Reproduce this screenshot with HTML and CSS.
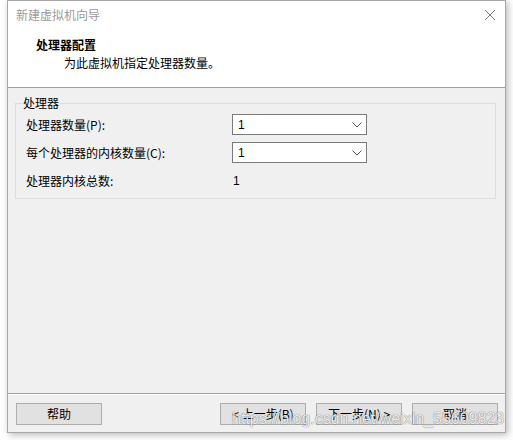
FILE: index.html
```html
<!DOCTYPE html>
<html lang="zh-CN">
<head>
<meta charset="utf-8">
<title>新建虚拟机向导</title>
<link rel="stylesheet" href="styles.css">
</head>
<body>
<div class="window">
  <div class="header">
    <div class="titlebar">
      <span class="title">新建虚拟机向导</span>
      <svg class="close" width="12" height="12" viewBox="0 0 12 12"><path d="M1 1 L11 11 M11 1 L1 11" stroke="#7a7a7a" stroke-width="1" fill="none"/></svg>
    </div>
    <div class="heading">处理器配置</div>
    <div class="subheading">为此虚拟机指定处理器数量。</div>
  </div>
  <div class="content">
    <fieldset class="group">
      <legend class="legend">处理器</legend>
      <div class="grid">
        <div class="label">处理器数量(P):</div>
        <div class="select"><span>1</span><svg width="10" height="6" viewBox="0 0 10 6"><path d="M0.5 0.5 L5 5 L9.5 0.5" stroke="#555" stroke-width="1" fill="none"/></svg></div>
        <div class="label">每个处理器的内核数量(C):</div>
        <div class="select"><span>1</span><svg width="10" height="6" viewBox="0 0 10 6"><path d="M0.5 0.5 L5 5 L9.5 0.5" stroke="#555" stroke-width="1" fill="none"/></svg></div>
        <div class="label">处理器内核总数:</div>
        <div class="value">1</div>
      </div>
    </fieldset>
  </div>
  <div class="footer">
    <button class="btn">帮助</button>
    <div class="spacer"></div>
    <button class="btn">&lt; 上一步(B)</button>
    <button class="btn">下一步(N) &gt;</button>
    <button class="btn">取消</button>
    <div class="watermark">https://blog.csdn.net/weixin_55609823</div>
  </div>
</div>
</body>
</html>
```
FILE: styles.css
```css
html, body {
  margin: 0;
  padding: 0;
  background: #ffffff;
}
body {
  width: 513px;
  height: 440px;
  overflow: hidden;
  font-family: "Noto Sans CJK SC", "Liberation Sans", sans-serif;
  font-size: 12px;
  color: #000;
}
.window {
  margin-left: 7px;
  width: 499px;
  height: 433px;
  box-sizing: border-box;
  border: 1px solid #a8a8a8;
  background: #f0f0f0;
  display: flex;
  flex-direction: column;
  box-shadow: 2px 2px 7px rgba(0, 0, 0, 0.28);
}
.header {
  height: 86px;
  background: #ffffff;
  border-bottom: 1px solid #a0a0a0;
  flex: none;
}
.titlebar {
  height: 28px;
  display: flex;
  align-items: center;
  padding: 0 9px 0 8px;
}
.title {
  color: #9a9a9a;
  line-height: 28px;
  flex: 1;
}
.close {
  display: block;
}
.heading {
  margin-top: 7px;
  padding-left: 28px;
  font-weight: bold;
  line-height: 18px;
}
.subheading {
  padding-left: 56px;
  line-height: 18px;
}
.content {
  flex: 1;
  padding: 8px 9px 0 7px;
  border-bottom: 1px solid #a0a0a0;
}
.group {
  margin: 0;
  border: 1px solid #dcdcdc;
  padding: 0 10px 7px 10px;
}
.legend {
  padding: 0 1px;
  margin-left: -4px;
  line-height: 14px;
}
.grid {
  margin-top: 4px;
  display: grid;
  grid-template-columns: 206px 135px;
  grid-auto-rows: 21px;
  row-gap: 7px;
  align-items: center;
}
.label {
  line-height: 21px;
}
.select {
  box-sizing: border-box;
  height: 21px;
  border: 1px solid #7a7a7a;
  background: #fff;
  display: flex;
  align-items: center;
  justify-content: space-between;
  padding: 0 4px 0 5px;
  font-family: "Liberation Sans", sans-serif;
}
.select svg {
  display: block;
}
.value {
  padding-left: 1px;
  font-family: "Liberation Sans", sans-serif;
}
.footer {
  position: relative;
  height: 38px;
  box-sizing: border-box;
  padding: 8px 7px 8px 8px;
  display: flex;
  gap: 10px;
  border-top: 1px solid #ffffff;
  flex: none;
}
.spacer {
  flex: 1;
}
.btn {
  width: 86px;
  height: 22px;
  box-sizing: border-box;
  border: 1px solid #adadad;
  background: #e1e1e1;
  font-family: "Noto Sans CJK SC", "Liberation Sans", sans-serif;
  font-size: 12px;
  color: #000;
  padding: 0;
  line-height: 20px;
}
.watermark {
  position: absolute;
  left: 224px;
  top: 15px;
  font-family: "Liberation Sans", sans-serif;
  font-size: 16px;
  color: rgba(255, 255, 255, 0.9);
  text-shadow: 0 0 1px rgba(0, 0, 0, 0.5), 0 0 1px rgba(0, 0, 0, 0.3);
  white-space: nowrap;
  pointer-events: none;
}
```
